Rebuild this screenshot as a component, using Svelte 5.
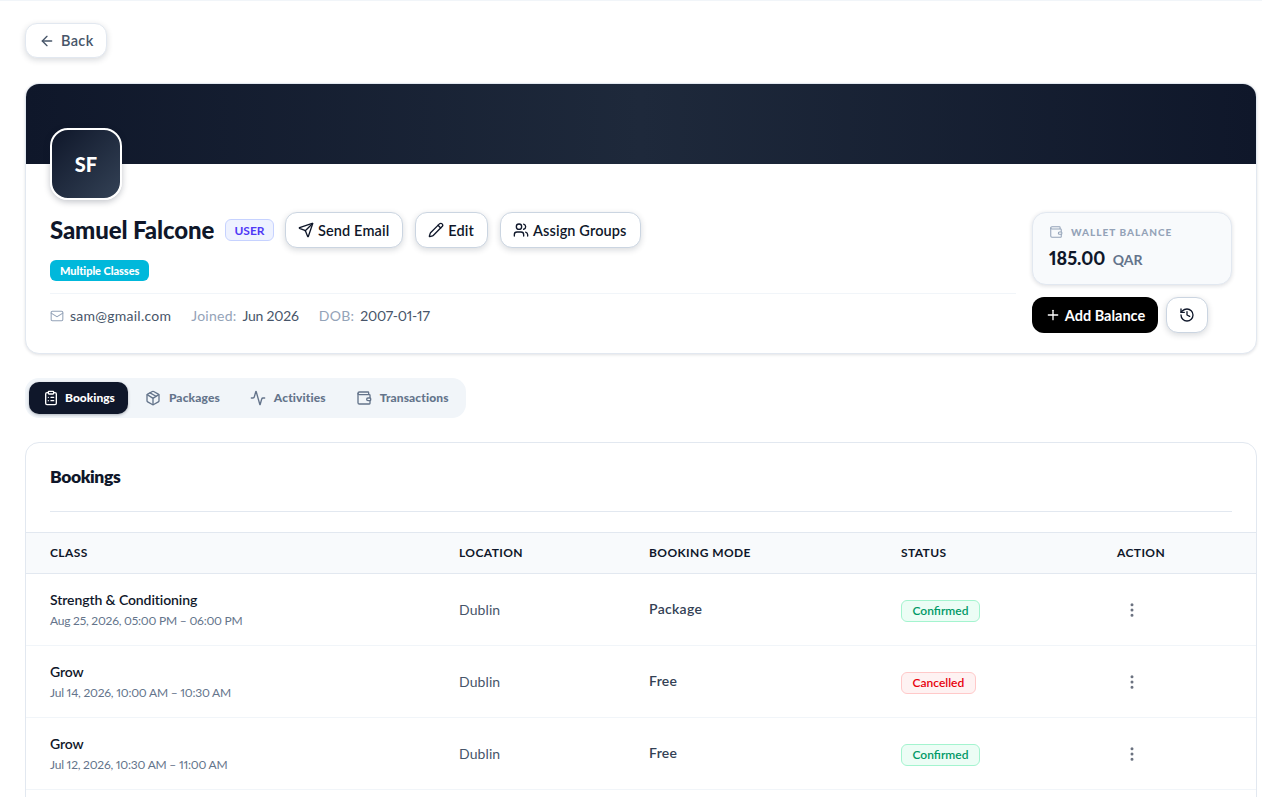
<script>
  const icons = {
    back: ['m12 19-7-7 7-7', 'M19 12H5'],
    send: ['M14.536 21.686a.5.5 0 0 0 .937-.024l6.5-19a.496.496 0 0 0-.635-.635l-19 6.5a.5.5 0 0 0-.024.937l7.93 3.18a2 2 0 0 1 1.112 1.11z', 'm21.854 2.147-10.94 10.939'],
    pencil: ['M21.174 6.812a1 1 0 0 0-3.986-3.987L3.842 16.174a2 2 0 0 0-.5.83l-1.321 4.352a.5.5 0 0 0 .623.622l4.353-1.32a2 2 0 0 0 .83-.497z', 'm15 5 4 4'],
    users: ['M16 21v-2a4 4 0 0 0-4-4H6a4 4 0 0 0-4 4v2', 'M5 7a4 4 0 1 0 8 0a4 4 0 1 0-8 0', 'M22 21v-2a4 4 0 0 0-3-3.87', 'M16 3.13a4 4 0 0 1 0 7.75'],
    mail: ['M4 4h16a2 2 0 0 1 2 2v12a2 2 0 0 1-2 2H4a2 2 0 0 1-2-2V6a2 2 0 0 1 2-2z', 'm22 7-8.97 5.7a1.94 1.94 0 0 1-2.06 0L2 7'],
    wallet: ['M19 7V4a1 1 0 0 0-1-1H5a2 2 0 0 0 0 4h15a1 1 0 0 1 1 1v4h-3a2 2 0 0 0 0 4h3a1 1 0 0 0 1-1v-2a1 1 0 0 0-1-1', 'M3 5v14a2 2 0 0 0 2 2h15a1 1 0 0 0 1-1v-4'],
    plus: ['M5 12h14', 'M12 5v14'],
    history: ['M3 12a9 9 0 1 0 9-9 9.75 9.75 0 0 0-6.74 2.74L3 8', 'M3 3v5h5', 'M12 7v5l4 2'],
    clipboard: ['M9 2h6a1 1 0 0 1 1 1v2a1 1 0 0 1-1 1H9a1 1 0 0 1-1-1V3a1 1 0 0 1 1-1z', 'M16 4h2a2 2 0 0 1 2 2v14a2 2 0 0 1-2 2H6a2 2 0 0 1-2-2V6a2 2 0 0 1 2-2h2', 'M12 11h4', 'M12 16h4', 'M8 11h.01', 'M8 16h.01'],
    package: ['M11 21.73a2 2 0 0 0 2 0l7-4A2 2 0 0 0 21 16V8a2 2 0 0 0-1-1.73l-7-4a2 2 0 0 0-2 0l-7 4A2 2 0 0 0 3 8v8a2 2 0 0 0 1 1.73z', 'M12 22V12', 'm3.3 7 7.703 4.734a2 2 0 0 0 1.994 0L20.7 7', 'm7.5 4.27 9 5.15'],
    activity: ['M22 12h-2.48a2 2 0 0 0-1.93 1.46l-2.35 8.36a.25.25 0 0 1-.48 0L9.24 2.18a.25.25 0 0 0-.48 0l-2.35 8.36A2 2 0 0 1 4.49 12H2'],
    more: ['M11 12a1 1 0 1 0 2 0a1 1 0 1 0-2 0', 'M11 5a1 1 0 1 0 2 0a1 1 0 1 0-2 0', 'M11 19a1 1 0 1 0 2 0a1 1 0 1 0-2 0']
  };

  const tabs = [
    { label: 'Bookings', icon: 'clipboard', active: true },
    { label: 'Packages', icon: 'package' },
    { label: 'Activities', icon: 'activity' },
    { label: 'Transactions', icon: 'wallet' }
  ];

  const bookings = [
    { name: 'Strength & Conditioning', time: 'Aug 25, 2026, 05:00 PM – 06:00 PM', location: 'Dublin', mode: 'Package', status: 'Confirmed' },
    { name: 'Grow', time: 'Jul 14, 2026, 10:00 AM – 10:30 AM', location: 'Dublin', mode: 'Free', status: 'Cancelled' },
    { name: 'Grow', time: 'Jul 12, 2026, 10:30 AM – 11:00 AM', location: 'Dublin', mode: 'Free', status: 'Confirmed' }
  ];
</script>

{#snippet icon(name, size, width = 2)}
  <svg class="icon" viewBox="0 0 24 24" width={size} height={size} fill="none" stroke="currentColor" stroke-width={width} stroke-linecap="round" stroke-linejoin="round">
    {#each icons[name] as d}<path {d} />{/each}
  </svg>
{/snippet}

<div class="page">
  <button class="btn back">{@render icon('back', 16)}Back</button>

  <section class="card profile">
    <div class="banner"></div>
    <div class="body">
      <div class="avatar">SF</div>
      <div class="columns">
        <div class="info">
          <div class="name-row">
            <h1>Samuel Falcone</h1>
            <span class="role">USER</span>
            <button class="btn action">{@render icon('send', 16)}Send Email</button>
            <button class="btn action">{@render icon('pencil', 16)}Edit</button>
            <button class="btn action">{@render icon('users', 16)}Assign Groups</button>
          </div>
          <div class="tag-row"><span class="tag">Multiple Classes</span></div>
          <div class="meta">
            <span class="meta-item email">{@render icon('mail', 14, 1.8)}sam@gmail.com</span>
            <span class="meta-item"><span class="label">Joined:</span><span class="value">Jun 2026</span></span>
            <span class="meta-item"><span class="label">DOB:</span><span class="value">2007-01-17</span></span>
          </div>
        </div>
        <div class="side">
          <div class="wallet">
            <div class="wallet-label">{@render icon('wallet', 14, 1.8)}WALLET BALANCE</div>
            <div class="wallet-amount">185.00 <span>QAR</span></div>
          </div>
          <div class="side-actions">
            <button class="add">{@render icon('plus', 16)}Add Balance</button>
            <button class="btn history" aria-label="History">{@render icon('history', 16)}</button>
          </div>
        </div>
      </div>
    </div>
  </section>

  <nav class="tabs">
    {#each tabs as t}
      <button class="tab" class:active={t.active}>{@render icon(t.icon, 16)}<span class="tab-label">{t.label}</span></button>
    {/each}
  </nav>

  <section class="card list">
    <div class="list-head"><h2>Bookings</h2></div>
    <table>
      <colgroup>
        <col class="c1" /><col class="c2" /><col class="c3" /><col class="c4" /><col />
      </colgroup>
      <thead>
        <tr><th>CLASS</th><th>LOCATION</th><th>BOOKING MODE</th><th>STATUS</th><th>ACTION</th></tr>
      </thead>
      <tbody>
        {#each bookings as b}
          <tr>
            <td>
              <div class="class-name">{b.name}</div>
              <div class="class-time">{b.time}</div>
            </td>
            <td class="loc">{b.location}</td>
            <td class="mode"><span>{b.mode}</span></td>
            <td><span class="status {b.status.toLowerCase()}">{b.status}</span></td>
            <td><button class="more" aria-label="More">{@render icon('more', 18)}</button></td>
          </tr>
        {/each}
        <tr class="filler"><td colspan="5"></td></tr>
      </tbody>
    </table>
  </section>
</div>

<style>
  :global(body) {
    margin: 0;
    background: #fff;
    font-family: "Lato", "Noto Sans", sans-serif;
    font-variant-numeric: proportional-nums;
    color: #0f172a;
  }
  :global(html), :global(body) { overflow: hidden; }
  .page {
    box-sizing: border-box;
    height: 797px;
    overflow: hidden;
    padding: 23px 0 0 25px;
    border-top: 1px solid #f1f5f9;
  }
  .icon { display: block; flex: none; }
  button { font-family: inherit; font-variant-numeric: inherit; cursor: pointer; }
  h1, h2 { margin: 0; }

  .btn {
    display: inline-flex;
    align-items: center;
    background: #fff;
    border: 1px solid #cbd5e1;
    border-radius: 12px;
    box-shadow: 0 2px 6px rgba(15, 23, 42, 0.16);
    padding: 0;
  }
  .back {
    height: 35px;
    width: 82px;
    padding-left: 13px;
    gap: 6px;
    box-sizing: border-box;
    border-color: #e2e8f0;
    color: #475569;
    font-size: 14.5px;
    font-weight: 600;
    letter-spacing: 0.35px;
    margin-top: -1px;
  }

  .card {
    box-sizing: border-box;
    width: 1232px;
    background: #fff;
    border: 1px solid #e2e8f0;
    border-radius: 14px;
    overflow: hidden;
  }
  .profile {
    margin-top: 25px;
    height: 271px;
    box-shadow: 0 1px 3px rgba(15, 23, 42, 0.12);
  }
  .banner {
    height: 80px;
    background: linear-gradient(90deg, #0f172a 0%, #1e293b 50%, #0f172a 100%);
  }
  .body { padding: 0 24px; }
  .avatar {
    box-sizing: border-box;
    width: 72px;
    height: 72px;
    margin-top: -36px;
    position: relative;
    display: flex;
    align-items: center;
    justify-content: center;
    border: 2px solid #fff;
    border-radius: 18px;
    background: linear-gradient(135deg, #0f172a, #334155);
    box-shadow: 0 2px 6px rgba(15, 23, 42, 0.25);
    color: #fff;
    font-size: 20px;
    font-weight: 900;
  }
  .columns { display: flex; gap: 16px; margin-top: 12px; }
  .info { flex: 1; min-width: 0; }
  .name-row { display: flex; align-items: center; height: 36px; }
  h1 {
    font-size: 24px;
    font-weight: 900;
    letter-spacing: -0.13px;
    width: 175px;
    white-space: nowrap;
    line-height: 36px;
  }
  .role {
    box-sizing: border-box;
    width: 49px;
    height: 22px;
    display: flex;
    align-items: center;
    justify-content: center;
    background: #eef2ff;
    border: 1px solid #c6d2ff;
    border-radius: 6px;
    color: #4f39f6;
    font-size: 12px;
    font-weight: 700;
    margin-right: 11px;
  }
  .action {
    box-sizing: border-box;
    height: 36px;
    padding: 0 13px 0 12px;
    gap: 4px;
    margin-right: 12px;
    color: #0f172a;
    font-size: 14.5px;
    font-weight: 600;
    letter-spacing: 0.12px;
    white-space: nowrap;
  }
  .tag-row { margin-top: 11px; height: 21px; }
  .tag {
    display: inline-flex;
    align-items: center;
    height: 21px;
    padding: 0 10px;
    background: #00b8db;
    border-radius: 6px;
    color: #fff;
    font-size: 11px;
    font-weight: 900;
    letter-spacing: -0.05px;
  }
  .meta {
    margin-top: 13px;
    border-top: 1px solid #f1f5f9;
    padding-top: 12px;
    display: flex;
    gap: 20px;
    font-size: 14px;
    letter-spacing: 0.25px;
    color: #475569;
    line-height: 20px;
  }
  .meta-item { display: flex; align-items: center; gap: 6px; }
  .email :global(svg) { color: #94a3b8; }
  .label { color: #94a3b8; }
  .value { letter-spacing: -0.2px; }

  .side { width: 200px; flex: none; }
  .wallet {
    box-sizing: border-box;
    height: 73px;
    padding: 11px 16px;
    background: #f8fafc;
    border: 1px solid #e2e8f0;
    border-radius: 14px;
    box-shadow: 0 1px 4px rgba(15, 23, 42, 0.14);
  }
  .wallet-label {
    display: flex;
    align-items: center;
    gap: 8px;
    color: #94a3b8;
    font-size: 10px;
    font-weight: 900;
    letter-spacing: 1px;
    height: 16px;
  }
  .wallet-amount {
    margin-top: 5px;
    font-size: 18px;
    font-weight: 900;
    line-height: 26px;
  }
  .wallet-amount span {
    color: #64748b;
    font-size: 14px;
    font-weight: 700;
    margin-left: 3px;
  }
  .side-actions { display: flex; gap: 8px; margin-top: 12px; }
  .add {
    box-sizing: border-box;
    width: 126px;
    height: 36px;
    display: flex;
    align-items: center;
    justify-content: center;
    gap: 4px;
    background: #000;
    border: 0;
    border-radius: 12px;
    color: #fff;
    font-size: 14.5px;
    font-weight: 700;
  }
  .history {
    box-sizing: border-box;
    width: 42px;
    height: 36px;
    justify-content: center;
    color: #0f172a;
  }

  .tabs {
    box-sizing: border-box;
    width: 441px;
    height: 40px;
    margin-top: 24px;
    padding: 4px;
    display: flex;
    background: #f1f5f9;
    border-radius: 14px;
  }
  .tab {
    display: flex;
    align-items: center;
    gap: 8px;
    height: 32px;
    padding: 0 15px;
    background: none;
    border: 0;
    border-radius: 10px;
    color: #64748b;
    font-size: 12px;
    font-weight: 900;
    letter-spacing: 0.12px;
    white-space: nowrap;
  }
  .tab-label { margin-bottom: 2px; }
  .tab.active {
    background: #0f172a;
    color: #fff;
    box-shadow: 0 1px 3px rgba(15, 23, 42, 0.3);
    padding: 0 13px 0 14px;
    gap: 6px;
    letter-spacing: 0;
    margin-right: 2px;
  }

  .list { margin-top: 24px; }
  .list-head {
    box-sizing: border-box;
    margin: 0 24px 20px;
    height: 69px;
    padding-bottom: 2px;
    border-bottom: 1px solid #e2e8f0;
    display: flex;
    align-items: center;
  }
  h2 { font-size: 17.5px; font-weight: 800; letter-spacing: -0.4px; }
  table {
    width: 100%;
    table-layout: fixed;
    border-collapse: collapse;
  }
  .c1 { width: 409px; }
  .c2 { width: 190px; }
  .c3 { width: 252px; }
  .c4 { width: 216px; }
  th {
    height: 41px;
    padding: 0 0 1px 24px;
    box-sizing: border-box;
    text-align: left;
    background: #f8fafc;
    border-top: 1px solid #e2e8f0;
    border-bottom: 1px solid #e2e8f0;
    color: #0f172a;
    font-size: 12px;
    font-weight: 700;
    letter-spacing: 0.4px;
  }
  td {
    height: 71px;
    padding: 0 0 0 24px;
    border-bottom: 1px solid #f1f5f9;
  }
  .class-name { font-size: 14px; font-weight: 600; line-height: 20px; color: #0f172a; letter-spacing: -0.1px; }
  .class-time { font-size: 12px; line-height: 16px; margin-top: 3px; color: #64748b; letter-spacing: -0.22px; }
  .loc { font-size: 14px; color: #475569; letter-spacing: 0.1px; }
  .mode { font-size: 14px; font-weight: 600; color: #334155; letter-spacing: 0.3px; }
  .mode span { position: relative; top: -1px; }
  .status {
    display: inline-flex;
    align-items: center;
    box-sizing: border-box;
    height: 22px;
    margin-top: 2px;
    padding: 0 10.5px;
    border: 1px solid;
    border-radius: 6px;
    font-size: 12px;
    font-weight: 600;
  }
  .confirmed { background: #ecfdf5; border-color: #a4f4cf; color: #009966; }
  .cancelled { background: #fef2f2; border-color: #ffc9c9; color: #e7000b; }
  .more {
    display: block;
    background: none;
    border: 0;
    padding: 0;
    margin-left: 6px;
    color: #6b7280;
  }
  .filler td { height: 72px; }
</style>
